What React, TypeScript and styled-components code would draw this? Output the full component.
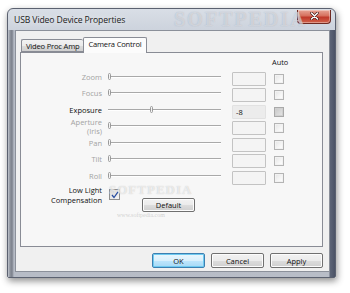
import React from "react";
import styled, { createGlobalStyle } from "styled-components";

const Global = createGlobalStyle`
  html, body { margin: 0; padding: 0; background: #ffffff; }
  body { font-family: "Open Sans", "Noto Sans", "Liberation Sans", sans-serif; }
  * { box-sizing: border-box; }
`;

const Page = styled.div`
  width: 350px;
  height: 293px;
  padding: 8px 0 0 7px;
  background: #ffffff;
  overflow: hidden;
`;

const Window = styled.div`
  position: relative;
  width: 329px;
  height: 270px;
  display: flex;
  flex-direction: column;
  border: 1px solid #5b6170;
  border-radius: 6px 6px 2px 2px;
  background: linear-gradient(180deg, #d9dee6 0%, #c9d0da 10%, #b9bfc9 100%);
  box-shadow: 1px 3px 7px rgba(0, 0, 0, 0.45);
`;

const TitleBar = styled.div`
  height: 21px;
  display: flex;
  align-items: center;
  justify-content: space-between;
  padding: 1px 4px 0 6px;
  position: relative;
`;

const Title = styled.span`
  font-size: 8.6px;
  color: #1b1b1b;
  letter-spacing: -0.1px;
  text-shadow: 0 0 6px rgba(255, 255, 255, 0.9);
`;

const TitleMark = styled.span`
  position: absolute;
  left: 166px;
  top: -1px;
  font-family: "Liberation Serif", serif;
  font-weight: 700;
  font-size: 20px;
  letter-spacing: 2px;
  color: rgba(255, 255, 255, 0.45);
  text-shadow: 0 0 1px rgba(120, 130, 150, 0.5);
`;

const CloseButton = styled.div`
  width: 34px;
  height: 14px;
  margin-top: -7px;
  border: 1px solid #6e2a22;
  border-top: none;
  border-radius: 0 0 4px 4px;
  background: linear-gradient(180deg, #e7a596 0%, #d6705d 45%, #c0392a 55%, #d0634b 100%);
  display: flex;
  align-items: center;
  justify-content: center;
  box-shadow: inset 0 0 0 1px rgba(255, 255, 255, 0.35);
`;

const FrameBody = styled.div`
  flex: 1;
  display: flex;
  padding: 0 5px 5px 7px;
  background: linear-gradient(
    90deg,
    #c1c6cf 0px,
    #8f949e 2px,
    #7b808b 4px,
    #b7bcc6 6px,
    #b8bdc7 calc(100% - 6px),
    #5d6577 calc(100% - 5px),
    #4c5366 100%
  );
`;

const Client = styled.div`
  flex: 1;
  background: #f0f0f0;
  border: 1px solid #8b909a;
  display: flex;
  flex-direction: column;
  padding: 5px 6px 0 4px;
`;

const TabRow = styled.div`
  display: flex;
  align-items: flex-end;
  height: 16px;
  padding-left: 1px;
  position: relative;
  z-index: 1;
`;

const Tab = styled.div<{ $active?: boolean }>`
  height: ${(p) => (p.$active ? "16px" : "13px")};
  margin-bottom: ${(p) => (p.$active ? "-1px" : "0")};
  padding: 0 4px;
  display: flex;
  align-items: center;
  font-size: 7.6px;
  letter-spacing: -0.2px;
  color: #111;
  border: 1px solid #898c95;
  border-bottom: ${(p) => (p.$active ? "none" : "1px solid #898c95")};
  border-right: ${(p) => (p.$active ? "1px solid #898c95" : "none")};
  border-radius: 2px 2px 0 0;
  background: ${(p) =>
    p.$active ? "#fcfcfc" : "linear-gradient(180deg, #f2f2f2 0%, #ebebeb 50%, #dddddd 51%, #cfcfcf 100%)"};
  padding-bottom: ${(p) => (p.$active ? "3px" : "0")};
`;

const Panel = styled.div`
  height: 195px;
  border: 1px solid #898c95;
  background: #f7f7f7;
  position: relative;
  display: grid;
  grid-template-columns: 81px 6px 113px 11px 34px 8px 10px;
  grid-auto-rows: 14px;
  row-gap: 2.5px;
  align-items: center;
  justify-content: start;
  align-content: start;
  padding: 2px 0 0 0;
`;

const Header = styled.div`
  grid-column: 7;
  font-size: 7.4px;
  color: #111;
  margin-left: -2px;
  line-height: 14px;
  white-space: nowrap;
`;

const Label = styled.div<{ $enabled?: boolean }>`
  grid-column: 1;
  font-size: 7.5px;
  line-height: 9px;
  text-align: right;
  color: ${(p) => (p.$enabled ? "#111" : "#a3a3a3")};
  margin-top: -3px;
`;

const SliderTrack = styled.div`
  grid-column: 3;
  position: relative;
  height: 14px;
  margin-top: -4px;
  &::before {
    content: "";
    position: absolute;
    left: 0;
    right: 0;
    top: 6px;
    height: 1px;
    background: #a9a9a9;
    box-shadow: 0 1px 0 #ffffff;
  }
`;

const Thumb = styled.div`
  position: absolute;
  top: 3px;
  width: 3px;
  height: 7px;
  border: 1px solid #9a9a9a;
  border-radius: 1.5px;
  background: #f4f4f4;
`;

const EditBox = styled.div<{ $readOnly?: boolean }>`
  grid-column: 5;
  height: 14px;
  border: 1px solid ${(p) => (p.$readOnly ? "#e2e2e2" : "#c3c3c3")};
  border-radius: 1px;
  background: ${(p) => (p.$readOnly ? "#ececec" : "#f4f4f4")};
  font-size: 7.5px;
  color: #111;
  padding-left: 3px;
  display: flex;
  align-items: center;
`;

const Check = styled.div<{ $grayed?: boolean }>`
  grid-column: 7;
  width: 10px;
  height: 10px;
  border: 1px solid ${(p) => (p.$grayed ? "#a9a9a9" : "#b4b4b4")};
  background: ${(p) =>
    p.$grayed
      ? "linear-gradient(135deg, #c7c7c7 0%, #dadada 60%, #e6e6e6 100%)"
      : "linear-gradient(135deg, #e4e4e4 0%, #f6f6f6 60%, #ffffff 100%)"};
  box-shadow: ${(p) => (p.$grayed ? "inset 0 0 0 1px #d0d0d0" : "inset 0 0 0 1px #f2f2f2")};
`;

const LowLightRow = styled.div`
  grid-column: 1 / -1;
  display: grid;
  grid-template-columns: 81px 12px 53px;
  justify-content: start;
  align-items: start;
  margin-top: -2px;
  height: 30px;
  align-self: start;
`;

const LowLabel = styled.div`
  font-size: 7.5px;
  line-height: 10px;
  text-align: right;
  color: #111;
`;

const LowCheck = styled.div`
  width: 11px;
  height: 11px;
  margin: 4px 0 0 7px;
  border: 1px solid #8f8f8f;
  background: linear-gradient(135deg, #dcdcdc 0%, #f4f4f4 100%);
  display: flex;
  align-items: center;
  justify-content: center;
`;

const DefaultButton = styled.div`
  width: 53px;
  height: 14px;
  margin: 13px 0 0 28px;
  border: 1px solid #707070;
  border-radius: 2px;
  background: linear-gradient(180deg, #f2f2f2 0%, #ebebeb 50%, #dddddd 51%, #cfcfcf 100%);
  box-shadow: inset 0 0 0 1px #fcfcfc;
  font-size: 7.5px;
  color: #111;
  display: flex;
  align-items: center;
  justify-content: center;
`;

const WaterMark = styled.span`
  position: absolute;
  left: 88px;
  top: 129px;
  font-family: "Liberation Serif", serif;
  font-weight: 700;
  font-size: 13px;
  letter-spacing: 1px;
  color: rgba(255, 255, 255, 0.6);
  text-shadow: 0 0 1px rgba(160, 160, 160, 0.6);
  pointer-events: none;
`;

const WaterUrl = styled.span`
  position: absolute;
  left: 96px;
  top: 159px;
  font-family: "Liberation Serif", serif;
  font-size: 6px;
  color: rgba(170, 170, 170, 0.5);
  pointer-events: none;
`;

const ButtonRow = styled.div`
  display: flex;
  justify-content: flex-end;
  gap: 6px;
  padding: 6px 0 0 0;
`;

const DialogButton = styled.div<{ $primary?: boolean }>`
  width: 53px;
  height: 15px;
  border: 1px solid ${(p) => (p.$primary ? "#3c7fb1" : "#707070")};
  border-radius: 2px;
  background: ${(p) =>
    p.$primary
      ? "linear-gradient(180deg, #eaf6fd 0%, #d9f0fc 50%, #bee6fd 51%, #a7d9f5 100%)"
      : "linear-gradient(180deg, #f2f2f2 0%, #ebebeb 50%, #dddddd 51%, #cfcfcf 100%)"};
  box-shadow: inset 0 0 0 1px ${(p) => (p.$primary ? "#6fcaf0" : "#fcfcfc")};
  font-size: 7.5px;
  color: #111;
  display: flex;
  align-items: center;
  justify-content: center;
`;

type Ctl = { name: string[]; enabled?: boolean; thumb: number; value?: string; grayed?: boolean };

const controls: Ctl[] = [
  { name: ["Zoom"], thumb: 0 },
  { name: ["Focus"], thumb: 0 },
  { name: ["Exposure"], enabled: true, thumb: 42, value: "-8", grayed: true },
  { name: ["Aperture", "(Iris)"], thumb: 0 },
  { name: ["Pan"], thumb: 0 },
  { name: ["Tilt"], thumb: 0 },
  { name: ["Roll"], thumb: 0 },
];

export default function App() {
  return (
    <>
      <Global />
      <Page>
        <Window>
          <TitleBar>
            <Title>USB Video Device Properties</Title>
            <TitleMark>SOFTPEDIA</TitleMark>
            <CloseButton>
              <svg width="9" height="8" viewBox="0 0 9 8">
                <path d="M1.5 1 L7.5 7 M7.5 1 L1.5 7" stroke="#3a1410" strokeWidth="2.6" strokeLinecap="round" />
                <path d="M1.5 1 L7.5 7 M7.5 1 L1.5 7" stroke="#ffffff" strokeWidth="1.5" strokeLinecap="round" />
              </svg>
            </CloseButton>
          </TitleBar>
          <FrameBody>
            <Client>
              <TabRow>
                <Tab>Video Proc Amp</Tab>
                <Tab $active>Camera Control</Tab>
              </TabRow>
              <Panel>
                <Header>Auto</Header>
                {controls.map((c) => (
                  <React.Fragment key={c.name[0]}>
                    <Label $enabled={c.enabled}>
                      {c.name.map((n) => (
                        <div key={n}>{n}</div>
                      ))}
                    </Label>
                    <SliderTrack>
                      <Thumb style={{ left: `${c.thumb}px` }} />
                    </SliderTrack>
                    <EditBox $readOnly={!!c.value}>{c.value}</EditBox>
                    <Check $grayed={c.grayed} />
                  </React.Fragment>
                ))}
                <LowLightRow>
                  <LowLabel>
                    <div>Low Light</div>
                    <div>Compensation</div>
                  </LowLabel>
                  <LowCheck>
                    <svg width="8" height="8" viewBox="0 0 8 8">
                      <path d="M1 4 L3 6.5 L7 0.8" stroke="#2a4fa0" strokeWidth="1.3" fill="none" />
                    </svg>
                  </LowCheck>
                  <DefaultButton>Default</DefaultButton>
                </LowLightRow>
                <WaterMark>SOFTPEDIA</WaterMark>
                <WaterUrl>www.softpedia.com</WaterUrl>
              </Panel>
              <ButtonRow>
                <DialogButton $primary>OK</DialogButton>
                <DialogButton>Cancel</DialogButton>
                <DialogButton>Apply</DialogButton>
              </ButtonRow>
            </Client>
          </FrameBody>
        </Window>
      </Page>
    </>
  );
}
